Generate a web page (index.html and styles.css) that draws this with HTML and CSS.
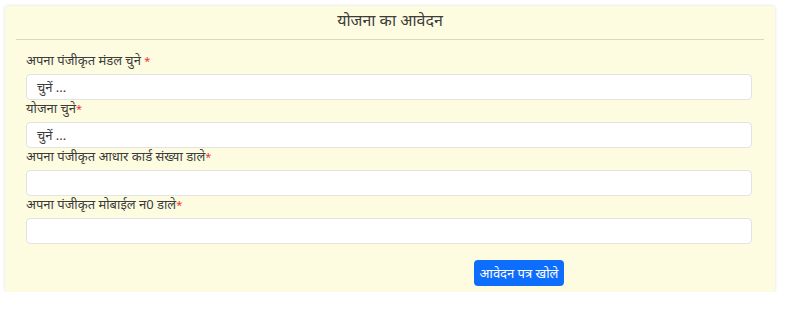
FILE: index.html
```html
<!DOCTYPE html>
<html lang="hi">
<head>
<meta charset="utf-8">
<link rel="stylesheet" href="styles.css">
</head>
<body>
<div class="page">
  <div class="card">
    <div class="card-header">योजना का आवेदन</div>
    <form class="card-body">
      <label class="lbl">अपना पंजीकृत मंडल चुने <span class="req">*</span></label>
      <div class="field select">चुनें ...</div>
      <label class="lbl">योजना चुने<span class="req">*</span></label>
      <div class="field select">चुनें ...</div>
      <label class="lbl">अपना पंजीकृत आधार कार्ड संख्या डाले<span class="req">*</span></label>
      <div class="field"></div>
      <label class="lbl">अपना पंजीकृत मोबाईल न0 डाले<span class="req">*</span></label>
      <div class="field"></div>
      <div class="actions">
        <button type="button" class="btn">आवेदन पत्र खोले</button>
      </div>
    </form>
  </div>
</div>
</body>
</html>
```
FILE: styles.css
```css
* { box-sizing: border-box; }
html, body { margin: 0; padding: 0; background: #fff; }
body { font-family: "Noto Sans", "Liberation Sans", sans-serif; color: #3c3c3c; }
.page { padding: 6px 10px 0 5px; }
.card {
  background: #fefce0;
  border-radius: 3px;
  box-shadow: 0 0 3px rgba(0,0,0,0.15);
  padding: 0 11px 6px 11px;
}
.card-header {
  text-align: center;
  font-size: 16px;
  height: 34px;
  line-height: 28px;
  border-bottom: 1px solid #d9d8c0;
}
.card-body { padding: 12px 12px 0 10px; }
.lbl {
  display: block;
  font-size: 13px;
  height: 17px;
  line-height: 17px;
  margin-bottom: 5px;
  overflow: visible;
}
.req { color: #e33; font-size: 11px; line-height: 0; }
.field {
  height: 26px;
  background: #fff;
  border: 1px solid #e3e3e3;
  border-radius: 4px;
  padding: 0 10px;
  font-size: 13px;
  line-height: 24px;
}
.actions { padding: 16px 0 0 448px; }
.btn {
  font-family: inherit;
  background: #0d6efd;
  color: #fff;
  border: none;
  border-radius: 4px;
  height: 26px;
  width: 90px;
  font-size: 13px;
  padding: 0;
}
```
